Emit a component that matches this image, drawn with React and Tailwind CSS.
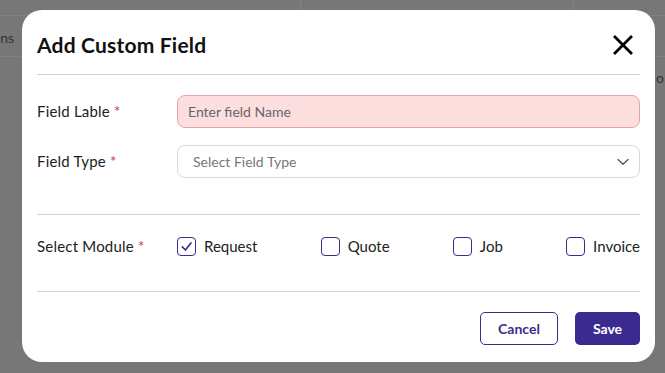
export default function App() {
  const font = { fontFamily: "Lato, 'Noto Sans', sans-serif" };
  const Check = ({ checked, label }) => (
    <label className="flex items-center gap-[8px] text-[15px] text-[#222]">
      <span className="w-[19px] h-[19px] rounded-[4px] border-[1.5px] border-[#3b2b8f] flex items-center justify-center bg-white">
        {checked && (
          <svg width="13" height="13" viewBox="0 0 14 14" fill="none">
            <path d="M2.5 7.5 L5.8 10.8 L11.8 3.2" stroke="#3b2b8f" strokeWidth="1.8" strokeLinecap="round" strokeLinejoin="round" />
          </svg>
        )}
      </span>
      <span>{label}</span>
    </label>
  );
  return (
    <div className="w-[665px] h-[373px] relative overflow-hidden bg-[#777777]" style={font}>
      <div className="absolute left-0 top-[15px] w-full h-px bg-[#828282]" />
      <div className="absolute left-0 top-[56px] w-full h-px bg-[#828282]" />
      <div className="absolute left-[300px] top-0 w-px h-[15px] bg-[#828282]" />
      <div className="absolute left-[573px] top-0 w-px h-[15px] bg-[#828282]" />
      <div className="absolute left-0 top-[27px] text-[14px] text-[#333] w-[14px] overflow-hidden whitespace-nowrap flex justify-end">ns</div>
      <div className="absolute left-[656px] top-[67px] text-[14px] text-[#333]">o</div>

      <div className="relative pt-[10px] pl-[22px]">
        <div className="w-[633px] h-[352px] rounded-[20px] bg-white flex flex-col">
          <div className="h-[64px] pt-[6px] flex items-center justify-between pl-[15px] pr-[22px]">
            <h2 className="text-[21px] font-bold text-[#111] tracking-[0.2px]">Add Custom Field</h2>
            <svg width="20" height="20" viewBox="0 0 20 20">
              <path d="M2 2 L18 18 M18 2 L2 18" stroke="#000" strokeWidth="2.8" strokeLinecap="square" />
            </svg>
          </div>
          <div className="mx-[15px] h-px bg-[#cfcfd8]" />

          <div className="mt-[20px] mx-[15px] flex items-center">
            <div className="w-[140px] text-[15px] text-[#222] tracking-[0.2px]">
              Field Lable <span className="text-[#e0312f]">*</span>
            </div>
            <div className="flex-1 h-[33px] rounded-[8px] border border-[#e8a3a3] bg-[#fddede] flex items-center pl-[10px] text-[14px] text-[#666]">
              Enter field Name
            </div>
          </div>

          <div className="mt-[17px] mx-[15px] flex items-center">
            <div className="w-[140px] text-[15px] text-[#222] tracking-[0.2px]">
              Field Type <span className="text-[#e0312f]">*</span>
            </div>
            <div className="flex-1 h-[33px] rounded-[8px] border border-[#d9d9d9] bg-white flex items-center justify-between pl-[15px] pr-[10px] text-[14px] text-[#777]">
              <span>Select Field Type</span>
              <svg width="12" height="8" viewBox="0 0 12 8" fill="none">
                <path d="M1 1.5 L6 6.2 L11 1.5" stroke="#555" strokeWidth="1.3" strokeLinecap="round" strokeLinejoin="round" />
              </svg>
            </div>
          </div>

          <div className="mt-[36px] mx-[15px] h-px bg-[#d4d4d8]" />

          <div className="mt-[22px] mx-[15px] h-[18px] flex items-center">
            <div className="w-[140px] text-[15px] text-[#222] tracking-[0.2px]">
              Select Module <span className="text-[#e0312f]">*</span>
            </div>
            <div className="flex-1 flex items-center justify-between">
              <Check checked label="Request" />
              <Check label="Quote" />
              <Check label="Job" />
              <Check label="Invoice" />
            </div>
          </div>

          <div className="mt-[36px] mx-[15px] h-px bg-[#d4d4d8]" />

          <div className="mt-[20px] mx-[15px] flex justify-end gap-[17px]">
            <button className="w-[78px] h-[33px] rounded-[5px] border border-[#3b2b8f] text-[#3b2b8f] text-[14px] font-bold bg-white">
              Cancel
            </button>
            <button className="w-[65px] h-[33px] rounded-[5px] bg-[#3b2b8f] text-white text-[14px] font-bold">
              Save
            </button>
          </div>
        </div>
      </div>
    </div>
  );
}
